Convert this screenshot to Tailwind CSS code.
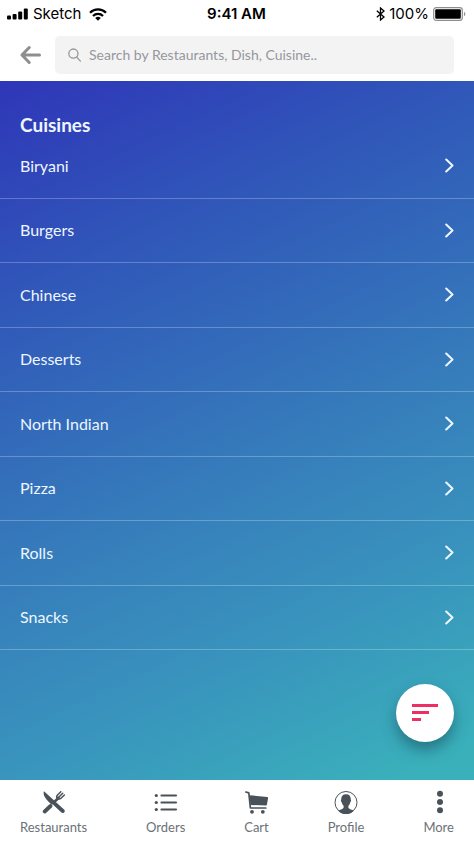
<!DOCTYPE html>
<html lang="en">
<head>
<meta charset="utf-8">
<meta name="viewport" content="width=device-width, initial-scale=1">
<title>Cuisines</title>
<script src="https://cdn.jsdelivr.net/npm/@tailwindcss/browser@4"></script>
</head>
<body class="min-h-screen flex flex-col bg-white font-['Lato',sans-serif]">
<header>
  <div class="grid grid-cols-3 items-center h-7 pl-[7px] pr-2 text-black font-['Inter',sans-serif] text-[15px] leading-7">
    <div class="flex items-center gap-1">
      <svg class="w-[22px] h-3" viewBox="0 0 22 12" aria-hidden="true"><rect x="0" y="7.5" width="4" height="4" rx="1"/><rect x="5.6" y="6" width="4" height="5.5" rx="1"/><rect x="11.2" y="3.5" width="4" height="8" rx="1"/><rect x="16.8" y="0.5" width="4" height="11" rx="1"/></svg>
      <span>Sketch</span>
      <svg class="w-[18px] h-[13px] ml-1" viewBox="0 0 18 13" fill="none" stroke="#000" stroke-width="2.3" aria-hidden="true"><path d="M1 4.7a11.4 11.4 0 0 1 16 0M4 8a7.1 7.1 0 0 1 10 0"/><path d="M9 12.8 6.2 10a4 4 0 0 1 5.6 0Z" fill="#000" stroke="none"/></svg>
    </div>
    <div class="text-center font-semibold">9:41 AM</div>
    <div class="flex items-center justify-end gap-1">
      <svg class="w-[9px] h-[14px]" viewBox="0 0 9 14" fill="none" stroke="#000" stroke-width="1.3" aria-hidden="true"><path d="M.8 3.8 8 10 4.500 13V1L8 4 .8 10.200"/></svg>
      <span>100%</span>
      <svg class="w-[33px] h-[14px]" viewBox="0 0 33 14" aria-hidden="true"><rect x=".7" y=".7" width="28.6" height="12.6" rx="2.5" fill="none" stroke="#8d8d8d" stroke-width="1.2"/><rect x="2.2" y="2.2" width="25.6" height="9.6" rx="1"/><path d="M31 4.8c1.8.8 1.8 3.6 0 4.4Z" fill="#8d8d8d"/></svg>
    </div>
  </div>
  <div class="flex items-center h-[53px] pt-1 pb-1 px-5">
    <button type="button" aria-label="Back" class="shrink-0">
      <svg class="w-[21px] h-5" viewBox="0 0 21 20" fill="none" stroke="#8d8e90" stroke-width="3" stroke-linecap="round" stroke-linejoin="round"><path d="M9.2 2.5 2 10l7.2 7.5M2.5 10h17"/></svg>
    </button>
    <label class="flex flex-1 items-center gap-2 h-[38px] ml-[14px] pl-[13px] pr-3 rounded-[5px] bg-[#f3f3f4]">
      <svg class="w-[13px] h-[14px] shrink-0" viewBox="0 0 13 14" fill="none" stroke="#97989b" stroke-width="1.3" stroke-linecap="round" aria-hidden="true"><circle cx="5.4" cy="5.6" r="4.6"/><path d="m8.7 9.1 3.7 4"/></svg>
      <input type="search" aria-label="Search" placeholder="Search by Restaurants, Dish, Cuisine.." class="flex-1 min-w-0 bg-transparent text-sm outline-none placeholder:text-[#96979b]">
    </label>
  </div>
</header>
<main class="relative flex-1 text-[#eef6ff] bg-[linear-gradient(155deg,#2f36b8_0%,#3058b9_25%,#367cbb_54%,#3995bd_76%,#3ab0bb_96%)]">
  <h1 class="h-[53px] pt-8 px-5 text-[19px] leading-6 font-bold">Cuisines</h1>
  <ul class="grid auto-rows-fr h-[516px] text-base">
    <li class="border-b border-white/25"><a href="#" class="flex h-full items-center justify-between px-5">Biryani<svg class="w-[9px] h-[15px]" viewBox="0 0 9 15" fill="none" stroke="currentColor" stroke-width="2" stroke-linecap="round" stroke-linejoin="round"><path d="m1.2 1.5 6.3 6-6.3 6"/></svg></a></li>
    <li class="border-b border-white/25"><a href="#" class="flex h-full items-center justify-between px-5">Burgers<svg class="w-[9px] h-[15px]" viewBox="0 0 9 15" fill="none" stroke="currentColor" stroke-width="2" stroke-linecap="round" stroke-linejoin="round"><path d="m1.2 1.5 6.3 6-6.3 6"/></svg></a></li>
    <li class="border-b border-white/25"><a href="#" class="flex h-full items-center justify-between px-5">Chinese<svg class="w-[9px] h-[15px]" viewBox="0 0 9 15" fill="none" stroke="currentColor" stroke-width="2" stroke-linecap="round" stroke-linejoin="round"><path d="m1.2 1.5 6.3 6-6.3 6"/></svg></a></li>
    <li class="border-b border-white/25"><a href="#" class="flex h-full items-center justify-between px-5">Desserts<svg class="w-[9px] h-[15px]" viewBox="0 0 9 15" fill="none" stroke="currentColor" stroke-width="2" stroke-linecap="round" stroke-linejoin="round"><path d="m1.2 1.5 6.3 6-6.3 6"/></svg></a></li>
    <li class="border-b border-white/25"><a href="#" class="flex h-full items-center justify-between px-5">North Indian<svg class="w-[9px] h-[15px]" viewBox="0 0 9 15" fill="none" stroke="currentColor" stroke-width="2" stroke-linecap="round" stroke-linejoin="round"><path d="m1.2 1.5 6.3 6-6.3 6"/></svg></a></li>
    <li class="border-b border-white/25"><a href="#" class="flex h-full items-center justify-between px-5">Pizza<svg class="w-[9px] h-[15px]" viewBox="0 0 9 15" fill="none" stroke="currentColor" stroke-width="2" stroke-linecap="round" stroke-linejoin="round"><path d="m1.2 1.5 6.3 6-6.3 6"/></svg></a></li>
    <li class="border-b border-white/25"><a href="#" class="flex h-full items-center justify-between px-5">Rolls<svg class="w-[9px] h-[15px]" viewBox="0 0 9 15" fill="none" stroke="currentColor" stroke-width="2" stroke-linecap="round" stroke-linejoin="round"><path d="m1.2 1.5 6.3 6-6.3 6"/></svg></a></li>
    <li class="border-b border-white/25"><a href="#" class="flex h-full items-center justify-between px-5">Snacks<svg class="w-[9px] h-[15px]" viewBox="0 0 9 15" fill="none" stroke="currentColor" stroke-width="2" stroke-linecap="round" stroke-linejoin="round"><path d="m1.2 1.5 6.3 6-6.3 6"/></svg></a></li>
  </ul>
  <button type="button" aria-label="Filter" class="absolute right-5 bottom-[38px] flex size-[58px] items-center justify-center rounded-full bg-white shadow-[0_8px_14px_rgba(20,70,80,0.5)]">
    <svg class="w-[26px] h-[18px]" viewBox="0 0 26 18" fill="#ed2f63"><path d="M0 0h26v3H0zM0 7h17v3H0zM0 14h9v3H0z"/></svg>
  </button>
</main>
<nav class="flex h-[63px] justify-between px-5 pt-[10px] text-[13px] leading-4 text-[#6c7177]">
  <a href="#" class="flex flex-col items-center gap-[5px]">
    <svg class="size-6" viewBox="0 0 24 24" fill="none" stroke="#4a5259" stroke-linecap="round"><path d="M2.700 21.500 8.500 16" stroke-width="3.800"/><path d="M12.500 11.800 16.500 8" stroke-width="2.600"/><path d="M2 1.300C.8 3.800 2.300 7.600 6.800 12l2.600 2.600 1.500-.1 8.500 8c2 1.400 4.400-.8 2.900-2.800Z" fill="#4a5259" stroke="none"/><path d="M18.800 1.800 15.500 5c-1.200 1.400-.8 2.700 0 3.400s2.200 1 3.500-.2l3.400-3.200M20.700 3.300l-4 4" stroke-width="1.500"/></svg>
    <span>Restaurants</span>
  </a>
  <a href="#" class="flex flex-col items-center gap-[5px]">
    <svg class="size-6" viewBox="0 0 24 24" fill="#4a5259"><circle cx="2.300" cy="5.500" r="1.600"/><circle cx="2.300" cy="12.500" r="1.600"/><circle cx="2.300" cy="19.500" r="1.600"/><path d="M7.500 5.500H22M7.500 12.500H22M7.500 19.500H22" stroke="#4a5259" stroke-width="2.200" stroke-linecap="round"/></svg>
    <span>Orders</span>
  </a>
  <a href="#" class="flex flex-col items-center gap-[5px]">
    <svg class="size-6" viewBox="0 0 24 24" fill="#4a5259"><path d="M5.300 5.200 23.300 7c.6.100.9.400.8 1l-1.200 6.800c-.1.500-.4.700-.9.700L6.600 15Z"/><path d="M1.800 2 4.800 2.900 6.400 18H21.800" fill="none" stroke="#4a5259" stroke-width="1.700" stroke-linecap="round" stroke-linejoin="round"/><circle cx="8" cy="21.800" r="1.900"/><circle cx="18.800" cy="21.800" r="1.900"/></svg>
    <span>Cart</span>
  </a>
  <a href="#" class="flex flex-col items-center gap-[5px]">
    <svg class="size-6" viewBox="0 0 24 24"><circle cx="12" cy="12.500" r="11" fill="#fff" stroke="#4a5259" stroke-width="1"/><path d="M12 4.200c-3.400 0-5 2.200-4.700 5.200-.8.300-.2 2.800.5 3 .3 1.500.9 2.600 1.800 3.300v2c-.8 1.600-3.800 1.800-5.500 3a10.700 10.700 0 0 0 15.800 0c-1.700-1.200-4.700-1.400-5.500-3v-2c.9-.7 1.500-1.800 1.800-3.300.7-.2 1.300-2.700.5-3C17 6.400 15.400 4.200 12 4.200Z" fill="#4a5259"/></svg>
    <span>Profile</span>
  </a>
  <a href="#" class="flex flex-col items-center gap-[5px]">
    <svg class="size-6" viewBox="0 0 24 24" fill="#4a5259"><circle cx="13" cy="3.700" r="3"/><circle cx="13" cy="12" r="3"/><circle cx="13" cy="20.300" r="3"/></svg>
    <span>More</span>
  </a>
</nav>
</body>
</html>
